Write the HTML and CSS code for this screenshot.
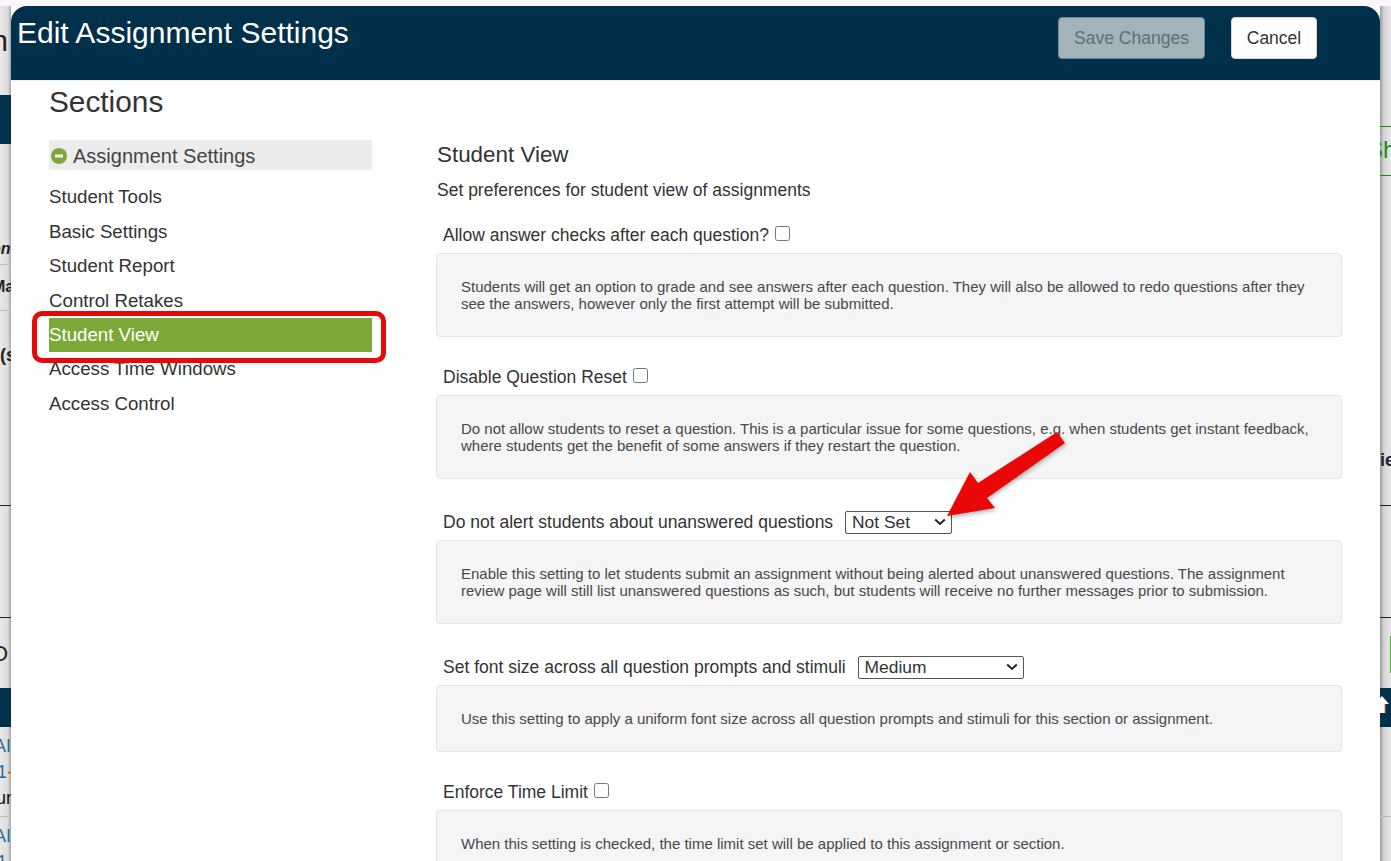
FILE: index.html
```html
<!DOCTYPE html>
<html lang="en">
<head>
<meta charset="utf-8">
<title>Edit Assignment Settings</title>
<link rel="stylesheet" href="styles.css">
</head>
<body>
<div class="topline"></div>
<div class="stage">
  <aside class="strip strip-left">
    <div class="frag frag-title" style="height:89px">m</div>
    <div class="band" style="height:49px"></div>
    <div class="frag frag-italic" style="height:120px">on</div>
    <div class="frag frag-bold rule-grey" style="height:46px">Ma</div>
    <div class="frag frag-paren rule-grey" style="height:195px">(s</div>
    <div class="frag rule-black" style="height:112px"></div>
    <div class="frag frag-big rule-black" style="height:71px">O</div>
    <div class="band" style="height:39px"></div>
    <div class="frag frag-link" style="height:89px"><span>AI</span><span class="one">1<b class="dash">-</b></span><span class="dark">ur</span></div>
    <div class="frag frag-link rule-grey"><span>AI</span><span class="one">1</span></div>
  </aside>
  <main class="modal">
    <header class="modal-head">
      <h1 class="modal-title">Edit Assignment Settings</h1>
      <div class="actions">
        <button class="btn btn-save" type="button">Save Changes</button>
        <button class="btn btn-cancel" type="button">Cancel</button>
      </div>
    </header>
    <div class="modal-body">
      <nav class="sections">
        <h2 class="sections-title">Sections</h2>
        <div class="group">
          <svg class="minus" viewBox="0 0 16 16" width="16" height="16"><circle cx="8" cy="8" r="8" fill="#7ca838"/><rect x="4" y="6.5" width="8" height="3" rx=".5" fill="#fff"/></svg>
          <span>Assignment Settings</span>
        </div>
        <ul class="menu">
          <li>Student Tools</li>
          <li>Basic Settings</li>
          <li>Student Report</li>
          <li>Control Retakes</li>
          <li class="active">Student View</li>
          <li>Access Time Windows</li>
          <li>Access Control</li>
        </ul>
      </nav>
      <section class="content">
        <h2 class="content-title">Student View</h2>
        <p class="lead">Set preferences for student view of assignments</p>
        <div class="setting s1">
          <label class="label">Allow answer checks after each question? <input type="checkbox"></label>
          <div class="well">Students will get an option to grade and see answers after each question. They will also be allowed to redo questions after they see the answers, however only the first attempt will be submitted.</div>
        </div>
        <div class="setting s2">
          <label class="label">Disable Question Reset <input type="checkbox"></label>
          <div class="well">Do not allow students to reset a question. This is a particular issue for some questions, e.g. when students get instant feedback, where students get the benefit of some answers if they restart the question.</div>
        </div>
        <div class="setting s3">
          <label class="label">Do not alert students about unanswered questions <select class="sel sel-a"><option>Not Set</option></select></label>
          <div class="well">Enable this setting to let students submit an assignment without being alerted about unanswered questions. The assignment review page will still list unanswered questions as such, but students will receive no further messages prior to submission.</div>
        </div>
        <div class="setting s4">
          <label class="label">Set font size across all question prompts and stimuli <select class="sel sel-b"><option>Medium</option></select></label>
          <div class="well">Use this setting to apply a uniform font size across all question prompts and stimuli for this section or assignment.</div>
        </div>
        <div class="setting s5">
          <label class="label">Enforce Time Limit <input type="checkbox"></label>
          <div class="well">When this setting is checked, the time limit set will be applied to this assignment or section.</div>
        </div>
      </section>
    </div>
  </main>
  <aside class="strip strip-right">
    <div class="frag" style="height:120px"></div>
    <div class="frag frag-green" style="height:49px">Sh</div>
    <div class="frag frag-ie rule-green" style="height:330px">ie</div>
    <div class="frag rule-black" style="height:112px"></div>
    <div class="frag rule-black frag-tab" style="height:71px"><i class="tab"></i></div>
    <div class="band band-arrow" style="height:39px">
      <svg viewBox="0 0 11 24" width="11" height="24"><path d="M0 2 L2 0 L9 8 H5 V17 H0 Z" fill="#fff"/><path d="M5.3 8 V17.5" stroke="#a33" stroke-width="1.2"/></svg>
    </div>
    <div class="frag" style="height:89px"></div>
    <div class="frag rule-grey"></div>
  </aside>
</div>
<div class="callout"></div>
<svg class="arrow" viewBox="0 0 1391 861" width="1391" height="861">
  <path d="M947 516 L970 472 L978 483 L1057 432 L1065 443 L987 498 L995 508 Z" fill="#e80808"/>
</svg>
</body>
</html>
```
FILE: styles.css
```css
* { box-sizing: border-box; }
html, body { margin: 0; padding: 0; height: 100%; }
body {
  position: relative;
  width: 1391px;
  height: 861px;
  overflow: hidden;
  background: #fff;
  font-family: "Liberation Sans", Arial, sans-serif;
  color: #333;
}
.topline { height: 6px; background: #fdf5fd; }
.stage { display: flex; height: 855px; overflow: hidden; }

.strip { width: 11px; flex: none; overflow: hidden; display: flex; flex-direction: column; position: relative; }
.strip-left { background: linear-gradient(90deg, #e8e8e8, #dcdcdc 70%, #a8a8a8); }
.strip-right { background: linear-gradient(90deg, #9a9a9a, #d4d4d4 35%, #e6e6e6); }
.frag { flex: none; white-space: nowrap; overflow: hidden; color: #222; }
.rule-grey { border-top: 1px solid #bdbdbd; }
.rule-black { border-top: 1px solid #222; }
.rule-green { border-top: 1px solid #1d8a1d; }
.band { flex: none; background: #00304a; overflow: hidden; }
.frag-title { font-size: 30px; line-height: 30px; padding-top: 20px; text-indent: -17px; }
.frag-italic { font: italic bold 16px/20px "Liberation Sans", sans-serif; padding-top: 95px; text-indent: -9px; }
.frag-bold { font: bold 16px/20px "Liberation Sans", sans-serif; padding-top: 12px; text-indent: -8px; }
.frag-paren { font: bold 18px/22px "Liberation Sans", sans-serif; padding-top: 33px; }
.frag-big { font-size: 22px; line-height: 26px; padding-top: 23px; text-indent: -9px; }
.frag-link { display: flex; flex-direction: column; gap: 0; padding-top: 5.5px; font-size: 18px; line-height: 26px; color: #2a6c9e; }
.frag-link span { text-indent: -6px; }
.frag-link .one { text-indent: -3px; }
.frag-link .dark { color: #111; text-indent: -4px; }
.dash { color: #b85a00; font-weight: normal; }
.frag-green { border-top: 1px solid #1d8a1d; color: #1d8a1d; font-size: 24px; line-height: 46px; text-indent: -13px; }
.frag-ie { font: bold 18px/22px "Liberation Sans", sans-serif; padding-top: 273px; color: #223; }
.frag-tab { position: relative; }
.tab { position: absolute; right: 0; top: 18px; width: 1px; height: 37px; background: #4caf30; }
.band-arrow svg { display: block; margin-top: 8px; }

.modal { flex: none; width: 1369px; height: 855px; background: #fff; display: flex; flex-direction: column; border-radius: 16px 16px 0 0; overflow: hidden; }
.modal-head { flex: none; height: 74px; background: #00304a; display: flex; justify-content: space-between; align-items: flex-start; padding: 0 63px 0 6px; }
.modal-title { margin: 10px 0 0; font-size: 30px; line-height: 34px; font-weight: 400; color: #fff; }
.actions { display: flex; gap: 26px; margin-top: 11px; }
.btn { height: 42px; border-radius: 4px; font: 17.5px "Liberation Sans", sans-serif; padding: 0; white-space: nowrap; }
.btn-save { width: 147px; background: #a3b3ba; border: 1px solid #6f858f; color: #5e7079; }
.btn-cancel { width: 86px; background: #fff; border: 1px solid #d5d5d5; color: #333; }

.modal-body { flex: 1; display: flex; min-height: 0; border-top: 1px solid #eee; }
.sections { width: 425px; flex: none; padding-left: 38px; }
.sections-title { margin: 3px 0 20px; font-size: 29.8px; line-height: 36px; font-weight: 400; color: #333; }
.group { width: 323px; height: 30px; background: #ececec; display: flex; align-items: center; gap: 6px; padding: 2px 0 0 2px; font-size: 20px; color: #444; }
.minus { flex: none; }
.menu { list-style: none; margin: 10.4px 0 0; padding: 0; width: 323px; }
.menu li { height: 34.4px; line-height: 34.4px; font-size: 18.7px; color: #333; }
.menu .active { background: #7ca838; color: #fff; }

.content { width: 906px; flex: none; }
.content-title { margin: 60px 0 0 1px; font-size: 22.4px; line-height: 28px; font-weight: 400; color: #333; }
.lead { margin: 11px 0 0 1px; font-size: 17.5px; line-height: 20px; color: #333; }
.label { display: block; padding-left: 7px; font-size: 17.5px; line-height: 24px; color: #333; }
.label input[type=checkbox] { margin: 0 0 0 1px; width: 15px; height: 15px; vertical-align: 0; }
.sel {
  appearance: none;
  margin-left: 7px;
  height: 23px;
  padding: 0 0 0 6px;
  font: 17.4px "Liberation Sans", sans-serif;
  color: #333;
  background: #fff url("data:image/svg+xml,%3Csvg xmlns='http://www.w3.org/2000/svg' width='12' height='8' viewBox='0 0 12 8'%3E%3Cpath d='M1.2 1.5 L6 6 L10.8 1.5' fill='none' stroke='%23222' stroke-width='2'/%3E%3C/svg%3E") no-repeat right 5px center;
  border: 1px solid #555;
  border-radius: 2px;
  vertical-align: 0;
}
.sel-a { width: 107px; }
.sel-b { width: 166px; }
.well { margin-top: 6px; padding: 24px; background: #f5f5f5; border: 1px solid #e5e5e5; border-radius: 4px; font-size: 15px; line-height: 17px; color: #484848; }
.s1 { margin-top: 23px; }
.s2 { margin-top: 28px; }
.s3 { margin-top: 31px; }
.s4 { margin-top: 31px; }
.s5 { margin-top: 28px; }

.callout { position: absolute; left: 32px; top: 311px; width: 354px; height: 52px; border: 5px solid #e80808; border-radius: 10px; pointer-events: none; }
.arrow { position: absolute; left: 0; top: 0; pointer-events: none; filter: drop-shadow(1px 2px 2px rgba(0,0,0,.3)); }
```
